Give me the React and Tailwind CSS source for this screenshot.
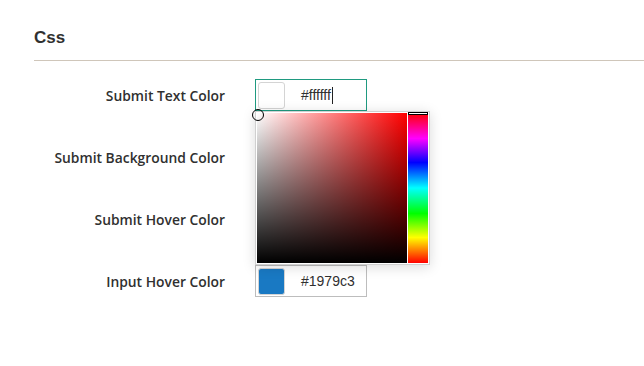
import React from "react";

function Row({ label, children }) {
  return (
    <div className="flex items-center h-8">
      <div className="w-[191px] pt-[2px] text-right text-[13.85px] font-semibold text-[#303030] font-['Open_Sans',sans-serif] leading-[30px]">
        {label}
      </div>
      <div className="ml-[30px]">{children}</div>
    </div>
  );
}

function ColorInput({ color, text, focused, caret }) {
  return (
    <div
      className={`w-[112px] h-8 border bg-white flex items-center p-[2px] ${
        focused ? "border-[#1f9a80]" : "border-[#bdbdbd]"
      }`}
    >
      <div
        className="w-[27px] h-[27px] rounded-[3px] border border-[#d4d4d4]"
        style={{ backgroundColor: color }}
      />
      <div className="ml-[16px] pt-px flex items-center text-[14px] text-[#303030] font-['Liberation_Sans',Arial,sans-serif]">
        {text}
        {caret && <span className="ml-px w-px h-[17px] bg-[#222]" />}
      </div>
    </div>
  );
}

export default function App() {
  return (
    <div className="w-[644px] h-[366px] bg-white relative overflow-hidden">
      <div className="pl-[34px] pt-[28px]">
        <h2 className="text-[17px] leading-[20px] font-bold text-[#303030] font-['Liberation_Sans',Arial,sans-serif]">
          Css
        </h2>
        <div className="mt-[12px] h-px bg-[#cfc6ba]" />
        <div className="mt-[18px] flex flex-col gap-[30px]">
          <Row label="Submit Text Color">
            <ColorInput color="#ffffff" text="#ffffff" focused caret />
          </Row>
          <Row label="Submit Background Color">
            <ColorInput color="#ffffff" text="#ffffff" />
          </Row>
          <Row label="Submit Hover Color">
            <ColorInput color="#ffffff" text="#ffffff" />
          </Row>
          <Row label="Input Hover Color">
            <ColorInput color="#1979c3" text="#1979c3" />
          </Row>
        </div>
      </div>

      {/* Color picker popup */}
      <div className="absolute left-[255px] top-[111px] bg-white border border-[#d0d0d0] p-px flex gap-px shadow-[0_2px_12px_rgba(0,0,0,0.15)]">
        <div className="w-[150px] h-[150px] bg-[linear-gradient(to_top,#000,rgba(0,0,0,0)),linear-gradient(to_right,#fff,#f00)]" />
        <div className="relative w-[20px] h-[150px] bg-[linear-gradient(to_bottom,#f00_0%,#f0f_17%,#00f_33%,#0ff_50%,#0f0_67%,#ff0_83%,#f00_100%)]">
          <div className="absolute left-0 top-[-1px] w-[20px] h-[3px] border border-black bg-white" />
        </div>
      </div>
      <div className="absolute left-[252px] top-[109px] w-[12px] h-[12px] rounded-full border border-black" />
    </div>
  );
}
